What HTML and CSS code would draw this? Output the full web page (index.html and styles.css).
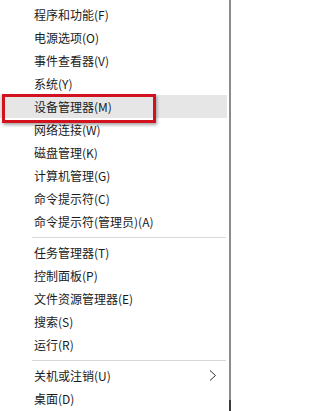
FILE: index.html
```html
<!DOCTYPE html>
<html lang="zh-CN">
<head>
<meta charset="utf-8">
<title>Menu</title>
<link rel="stylesheet" href="styles.css">
</head>
<body>
<div class="menu">
  <ul class="group">
    <li class="item">程序和功能(F)</li>
    <li class="item">电源选项(O)</li>
    <li class="item">事件查看器(V)</li>
    <li class="item">系统(Y)</li>
    <li class="item active">设备管理器(M)<span class="mark"></span></li>
    <li class="item">网络连接(W)</li>
    <li class="item">磁盘管理(K)</li>
    <li class="item">计算机管理(G)</li>
    <li class="item">命令提示符(C)</li>
    <li class="item">命令提示符(管理员)(A)</li>
  </ul>
  <div class="sep"></div>
  <ul class="group">
    <li class="item">任务管理器(T)</li>
    <li class="item">控制面板(P)</li>
    <li class="item">文件资源管理器(E)</li>
    <li class="item">搜索(S)</li>
    <li class="item">运行(R)</li>
  </ul>
  <div class="sep"></div>
  <ul class="group">
    <li class="item sub">关机或注销(U)
      <svg class="chev" width="8" height="11" viewBox="0 0 8 11"><path d="M1 0.5 L6.5 5.5 L1 10.5" fill="none" stroke="#333" stroke-width="1"/></svg>
    </li>
    <li class="item">桌面(D)</li>
  </ul>
</div>
</body>
</html>
```
FILE: styles.css
```css
html, body {
  margin: 0;
  padding: 0;
  background: #ffffff;
}
body {
  width: 233px;
  height: 411px;
  overflow: hidden;
  font-family: "Noto Sans CJK SC", "Microsoft YaHei", sans-serif;
  font-size: 12px;
  color: #1b1b1b;
}
.menu {
  position: relative;
  width: 231px;
  height: 411px;
  box-sizing: border-box;
  padding-top: 3px;
  border-right: 2px solid #8c8c8c;
  background: #ffffff;
}
.menu::after {
  content: "";
  position: absolute;
  right: -2px;
  bottom: 0;
  width: 2px;
  height: 11px;
  background: #3a3a3a;
}
.group {
  list-style: none;
  margin: 0;
  padding: 0;
}
.item {
  position: relative;
  height: 23px;
  line-height: 23px;
  padding-left: 34px;
  margin-right: 2px;
  white-space: nowrap;
}
.item.active {
  background: #e6e6e6;
}
.mark {
  position: absolute;
  left: 2px;
  top: -1px;
  width: 148px;
  height: 23px;
  border: 3px solid #d2131f;
  box-shadow: 1px 2px 3px rgba(0, 0, 0, 0.35);
}
.sep {
  height: 1px;
  margin: 4px 3px 3px 32px;
  background: #d8d8d8;
}
.chev {
  position: absolute;
  right: 10px;
  top: 6px;
}
```
